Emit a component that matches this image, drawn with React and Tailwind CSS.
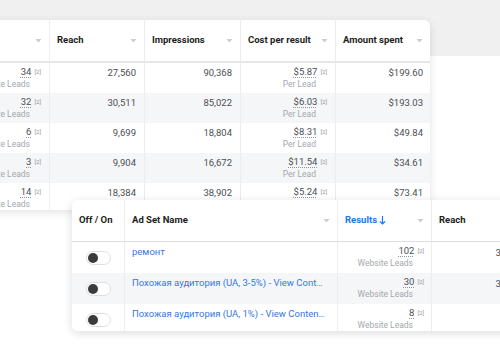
import React from 'react';

const font = { fontFamily: 'Roboto, "Noto Sans", Arial, sans-serif' };

const Caret = () => (
  <svg width="7" height="4" viewBox="0 0 7 4" className="shrink-0">
    <path d="M0.5 0h6L3.5 3.5z" fill="#c9ccd1" />
  </svg>
);

const Note = () => <span className="ml-[3px] text-[6px] text-[#90949c] leading-none">[2]</span>;

// cell with an underlined number, a footnote and a grey caption under it
const ResultCell = ({ value, caption }) => (
  <div className="flex flex-col items-end">
    <div className="flex items-center">
      <span className="underline decoration-dotted decoration-[#90949c] underline-offset-2 text-[#4b4f56] text-[9.5px] leading-[12px]">{value}</span>
      <Note />
    </div>
    <span className="mr-[11px] text-[8.5px] leading-[13px] text-[#a4a7ad]">{caption}</span>
  </div>
);

const topRows = [
  { res: '34', reach: '27,560', imp: '90,368', cost: '$5.87', spent: '$199.60' },
  { res: '32', reach: '30,511', imp: '85,022', cost: '$6.03', spent: '$193.03' },
  { res: '6', reach: '9,699', imp: '18,804', cost: '$8.31', spent: '$49.84' },
  { res: '3', reach: '9,904', imp: '16,672', cost: '$11.54', spent: '$34.61' },
  { res: '14', reach: '18,384', imp: '38,902', cost: '$5.24', spent: '$73.41' },
];

const adSets = [
  { name: 'ремонт', res: '102', reach: '33,574' },
  { name: 'Похожая аудитория (UA, 3-5%) - View Content', res: '30', reach: '31,208' },
  { name: 'Похожая аудитория (UA, 1%) - View Content Purchase', res: '8', reach: '7,931' },
];

const HeadCell = ({ w, children, last }) => (
  <div className={`${w} h-[41px] flex items-center justify-between px-[7px] ${last ? '' : 'border-r border-[#ebedf0]'}`}>
    {children}
  </div>
);

export default function App() {
  return (
    <div
      className="w-[500px] h-[350px] overflow-hidden bg-[linear-gradient(to_bottom,#f0f0f0_56px,#ffffff_56px)] pt-[20px]"
      style={font}
    >
      {/* top table, cut by the left edge */}
      <div className="ml-[-60px] w-[490px] h-[190px] overflow-hidden bg-white rounded-tr-[6px] shadow-[0_2px_8px_rgba(0,0,0,0.12)]">
        <div className="flex border-b-2 border-[#e4e6ea] text-[9.5px] font-bold text-[#1c1e21]">
          <HeadCell w="w-[110px]"><span /><Caret /></HeadCell>
          <HeadCell w="w-[95px]"><span>Reach</span><Caret /></HeadCell>
          <HeadCell w="w-[96px]"><span>Impressions</span><Caret /></HeadCell>
          <HeadCell w="w-[95px]"><span>Cost per result</span><Caret /></HeadCell>
          <HeadCell w="w-[94px]" last><span>Amount spent</span><Caret /></HeadCell>
        </div>
        {topRows.map((r, i) => (
          <div key={i} className={`flex h-[30px] text-[9.5px] text-[#4b4f56] ${i % 2 ? 'bg-[#f5f6f7]' : 'bg-white'}`}>
            <div className="w-[110px] pt-[3px] pr-[8px] border-r border-[#ebedf0]">
              <ResultCell value={r.res} caption="Website Leads" />
            </div>
            <div className="w-[95px] pt-[3px] pr-[8px] text-right border-r border-[#ebedf0]">{r.reach}</div>
            <div className="w-[96px] pt-[3px] pr-[8px] text-right border-r border-[#ebedf0]">{r.imp}</div>
            <div className="w-[95px] pt-[3px] pr-[8px] border-r border-[#ebedf0]">
              <ResultCell value={r.cost} caption="Per Lead" />
            </div>
            <div className="w-[94px] pt-[3px] pr-[7px] text-right">{r.spent}</div>
          </div>
        ))}
      </div>

      {/* ad sets table, on top */}
      <div className="relative z-10 mt-[-10px] ml-[72px] w-[460px] h-[131px] overflow-hidden bg-white rounded-l-[6px] shadow-[0_2px_10px_rgba(0,0,0,0.14)]">
        <div className="flex border-b border-[#dddfe2] text-[9.5px] font-bold text-[#1c1e21]">
          <HeadCell w="w-[53px]"><span>Off / On</span></HeadCell>
          <HeadCell w="w-[213px]"><span>Ad Set Name</span><Caret /></HeadCell>
          <HeadCell w="w-[94px]">
            <span className="text-[#1877f2] flex items-center gap-[2px]">
              Results
              <svg width="7" height="9" viewBox="0 0 7 9">
                <path d="M3.5 0v8M0.8 5.3L3.5 8l2.7-2.7" stroke="#1877f2" strokeWidth="1.2" fill="none" />
              </svg>
            </span>
            <Caret />
          </HeadCell>
          <HeadCell w="w-[100px]" last><span>Reach</span></HeadCell>
        </div>
        {adSets.map((r, i) => (
          <div key={i} className={`flex h-[31px] text-[9.5px] text-[#4b4f56] ${i % 2 ? 'bg-[#f5f6f7]' : 'bg-white'}`}>
            <div className="w-[53px] flex items-center justify-center border-r border-[#ebedf0]">
              <div className="w-[25px] h-[14px] rounded-full bg-white border border-[#dddfe2] flex items-center pl-[1px]">
                <div className="w-[10px] h-[10px] rounded-full bg-[#3b3b3b]" />
              </div>
            </div>
            <div className="w-[213px] pl-[7px] pr-[10px] pt-[3px] border-r border-[#ebedf0]">
              <div className="truncate text-[9.5px] leading-[14px] text-[#3578e5]">{r.name}</div>
            </div>
            <div className="w-[94px] pt-[3px] pr-[7px] border-r border-[#ebedf0]">
              <ResultCell value={r.res} caption="Website Leads" />
            </div>
            <div className="w-[100px] pt-[4px] pr-[8px] text-right">{r.reach}</div>
          </div>
        ))}
      </div>
    </div>
  );
}
